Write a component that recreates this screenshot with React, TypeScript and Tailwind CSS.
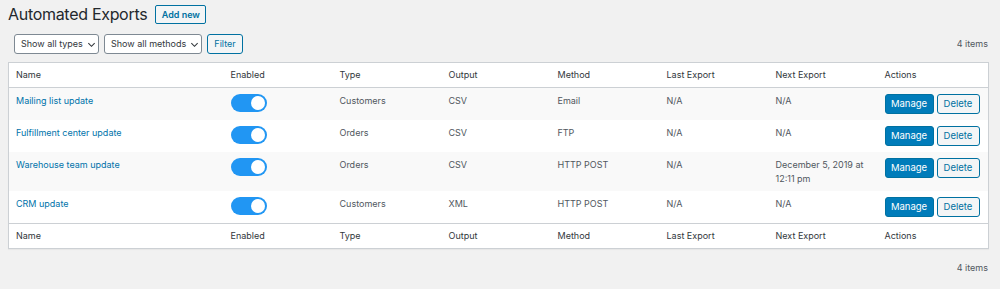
import React from "react";

type Row = {
  name: string;
  type: string;
  output: string;
  method: string;
  last: string;
  next: string[];
};

const rows: Row[] = [
  { name: "Mailing list update", type: "Customers", output: "CSV", method: "Email", last: "N/A", next: ["N/A"] },
  { name: "Fulfillment center update", type: "Orders", output: "CSV", method: "FTP", last: "N/A", next: ["N/A"] },
  { name: "Warehouse team update", type: "Orders", output: "CSV", method: "HTTP POST", last: "N/A", next: ["December 5, 2019 at", "12:11 pm"] },
  { name: "CRM update", type: "Customers", output: "XML", method: "HTTP POST", last: "N/A", next: ["N/A"] },
];

const headers = ["Name", "Enabled", "Type", "Output", "Method", "Last Export", "Next Export", "Actions"];

function Chevron() {
  return (
    <svg width="9" height="9" viewBox="0 0 10 10" fill="none" className="ml-[4px] mt-px shrink-0">
      <path d="M1.5 3.5 5 7l3.5-3.5" stroke="#32373c" strokeWidth="1.2" />
    </svg>
  );
}

function Toggle() {
  return (
    <div className="flex h-[18px] w-[36px] items-center justify-end rounded-full bg-[#2196f3] pr-[2px]">
      <div className="h-[14px] w-[14px] rounded-full bg-white" />
    </div>
  );
}

function HeaderRow({ bottom }: { bottom?: boolean }) {
  return (
    <tr className={bottom ? "border-t border-[#ccd0d4]" : "border-b border-[#ccd0d4]"}>
      {headers.map((h) => (
        <th key={h} className="px-[7px] py-[5px] text-left font-normal leading-[14px] text-[#32373c]">
          {h}
        </th>
      ))}
    </tr>
  );
}

export default function App() {
  return (
    <div
      className="min-h-[289px] bg-[#f1f1f1] pl-[8px] pr-[11px] text-[9px] text-[#50575e]"
      style={{ fontFamily: "Inter, 'Liberation Sans', sans-serif" }}
    >
      <div className="flex items-center pt-[5px]">
        <h1 className="text-[16px] leading-[19px] tracking-[-0.3px] text-[#23282d]">Automated Exports</h1>
        <button className="ml-[8px] h-[19px] w-[51px] rounded-[2px] border border-[#0071a1] bg-[#f3f5f6] text-[9px] font-semibold leading-[17px] text-[#0071a1]">
          Add new
        </button>
      </div>

      <div className="mt-[10px] flex items-center pl-[6px]">
        <div className="flex h-[20px] w-[85px] items-center whitespace-nowrap rounded-[3px] border border-[#7e8993] bg-white pl-[6px] text-[#32373c]">
          Show all types
          <Chevron />
        </div>
        <div className="ml-[5px] flex h-[20px] w-[98px] items-center whitespace-nowrap rounded-[3px] border border-[#7e8993] bg-white pl-[6px] text-[#32373c]">
          Show all methods
          <Chevron />
        </div>
        <button className="ml-[5px] h-[20px] w-[36px] rounded-[3px] border border-[#0071a1] bg-[#f3f5f6] leading-[18px] text-[#0071a1]">
          Filter
        </button>
        <div className="ml-auto pr-[1px] text-[#50575e]">4 items</div>
      </div>

      <table className="mt-[8px] w-full table-fixed border-collapse border border-[#ccd0d4] bg-white shadow-[0_1px_1px_rgba(0,0,0,0.04)]">
        <colgroup>
          <col className="w-[215px]" />
          <col />
          <col />
          <col />
          <col />
          <col />
          <col />
          <col className="w-[111px]" />
        </colgroup>
        <thead>
          <HeaderRow />
        </thead>
        <tbody>
          {rows.map((r, i) => (
            <tr key={r.name} className={i % 2 === 0 ? "bg-[#f9f9f9]" : "bg-white"}>
              <td className="px-[7px] pb-[5px] pt-[6px] align-top leading-[14px] text-[#0073aa]">{r.name}</td>
              <td className="px-[7px] pb-[5px] pt-[6px] align-top">
                <Toggle />
              </td>
              <td className="px-[7px] pb-[5px] pt-[6px] align-top leading-[14px]">{r.type}</td>
              <td className="px-[7px] pb-[5px] pt-[6px] align-top leading-[14px]">{r.output}</td>
              <td className="px-[7px] pb-[5px] pt-[6px] align-top leading-[14px]">{r.method}</td>
              <td className="px-[7px] pb-[5px] pt-[6px] align-top leading-[14px]">{r.last}</td>
              <td className="px-[7px] pb-[5px] pt-[6px] align-top leading-[14px]">
                {r.next.map((l) => (
                  <div key={l}>{l}</div>
                ))}
              </td>
              <td className="px-[7px] pb-[6px] pt-[6px] align-top">
                <div className="flex gap-[3px]">
                  <button className="h-[20px] w-[49px] rounded-[3px] border border-[#0071a1] bg-[#007cba] text-[9.5px] leading-[18px] text-white">
                    Manage
                  </button>
                  <button className="h-[20px] w-[43px] rounded-[3px] border border-[#0071a1] bg-[#f3f5f6] text-[9.5px] leading-[18px] text-[#0071a1]">
                    Delete
                  </button>
                </div>
              </td>
            </tr>
          ))}
        </tbody>
        <tfoot>
          <HeaderRow bottom />
        </tfoot>
      </table>

      <div className="mt-[12px] pr-[1px] text-right">4 items</div>
    </div>
  );
}
